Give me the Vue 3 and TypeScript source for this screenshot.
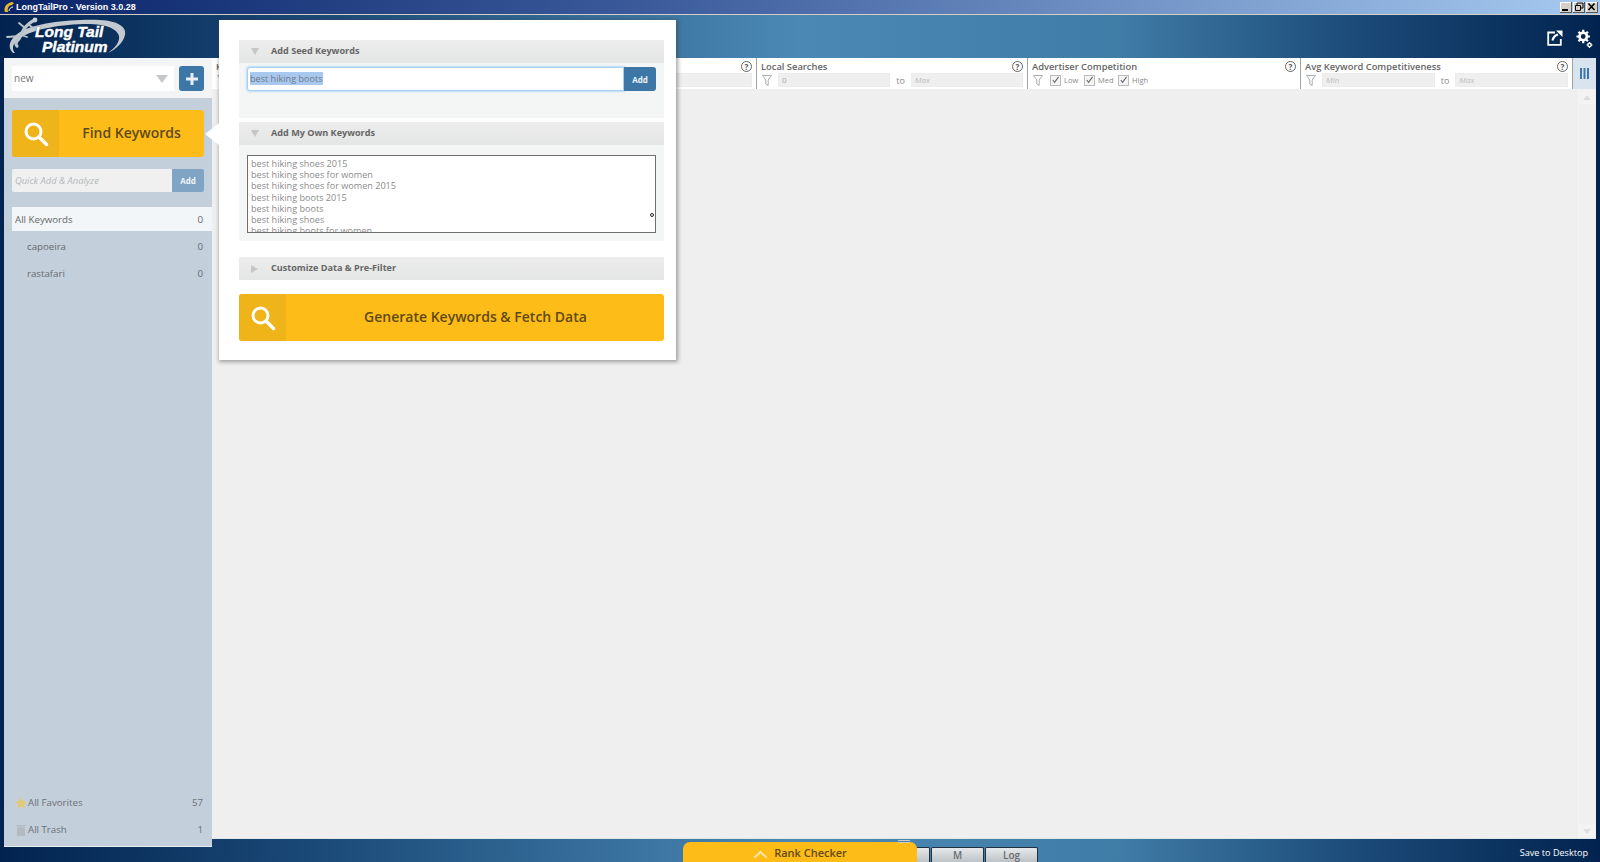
<script setup lang="ts">
type Filter = { title: string; kind: "range" | "checks"; from?: string };

const filters: Filter[] = [
  { title: "Keyword", kind: "range", from: "" },
  { title: "Local Searches", kind: "range", from: "0" },
  { title: "Advertiser Competition", kind: "checks" },
  { title: "Avg Keyword Competitiveness", kind: "range", from: "" }
];

const campaigns = [
  { name: "capoeira", count: 0 },
  { name: "rastafari", count: 0 }
];

const ownKeywords = [
  "best hiking shoes 2015",
  "best hiking shoes for women",
  "best hiking shoes for women 2015",
  "best hiking boots 2015",
  "best hiking boots",
  "best hiking shoes",
  "best hiking boots for women"
];

const levels = ["Low", "Med", "High"];
</script>

<template>
  <div class="app">
    <div class="titlebar">
      <svg class="title-icon" viewBox="0 0 12 12" width="12" height="12">
        <path d="M2 11 C0 6 4 2 9 1 L11 2 L9 4 C6 4 4 7 5 11 Z" fill="#e8b524" />
        <path d="M6 10 C6 8 8 6 10 6" stroke="#fff" fill="none" />
      </svg>
      <span class="title-text">LongTailPro - Version 3.0.28</span>
      <div class="win-buttons">
        <span class="win-btn"><svg viewBox="0 0 12 10" width="12" height="10"><rect x="2" y="7" width="6" height="2" fill="#000" /></svg></span>
        <span class="win-btn"><svg viewBox="0 0 12 10" width="12" height="10"><path d="M4 1h6v5H8M4 1v2M2.5 3.5h5v5h-5z" fill="none" stroke="#000" /></svg></span>
        <span class="win-btn"><svg viewBox="0 0 12 10" width="12" height="10"><path d="M2.5 1.5l6 6.5M8.5 1.5l-6 6.5" stroke="#000" stroke-width="1.6" /></svg></span>
      </div>
    </div>

    <header class="topbar">
      <div class="logo">
        <svg class="logo-art" viewBox="0 0 130 43" width="130" height="43">
          <path d="M13 38 C7 32 9 24 20 17 C36 8 70 4 100 5 C118 6 127 12 125 20 C123 28 116 34 108 38 C115 33 120 27 119 21 C117 13 104 9 88 9 C62 9 34 14 20 23 C13 28 11 33 15 38 Z" fill="#c2c9cf" />
          <path d="M35 5 C30 7 27 10 24 14 C21 19 21 22 18 25 C16 27 15 29 17 31" fill="none" stroke="#bcc4ca" stroke-width="3.2" stroke-linecap="round" />
          <path d="M28 9 L33 13 M25 13 L19 8 M21 20 L27 22 M20 21 L7 22 M17 26 L12 28" fill="none" stroke="#bcc4ca" stroke-width="1.8" stroke-linecap="round" />
          <circle cx="35" cy="5" r="2.4" fill="#c8ced3" />
        </svg>
        <div class="logo-words">
          <span class="logo-line">Long Tail</span>
          <span class="logo-line second">Platinum</span>
        </div>
      </div>
      <div class="top-actions">
        <svg class="share-icon" viewBox="0 0 16 16" width="16" height="16">
          <path d="M8 2.5H1.2v12.3h12.6V9" fill="none" stroke="#fff" stroke-width="1.8" />
          <path d="M5.5 10.5c.5-3 2.5-5 5.5-6" fill="none" stroke="#fff" stroke-width="2.2" />
          <path d="M9 0.5h6.5V7z" fill="#fff" />
        </svg>
        <svg class="gear-icon" viewBox="0 0 17 20" width="17" height="20">
          <circle cx="7.2" cy="7.5" r="3.7" fill="none" stroke="#fff" stroke-width="2.6" />
          <path d="M7.2 0.8v2.6M7.2 11.6v2.6M0.5 7.5h2.6M11.3 7.5h2.6M2.5 2.8l1.8 1.8M10.1 10.4l1.8 1.8M2.5 12.2l1.8-1.8M10.1 4.6l1.8-1.8" stroke="#fff" stroke-width="2.2" />
          <circle cx="13.5" cy="16" r="1.7" fill="none" stroke="#fff" stroke-width="1.5" />
          <path d="M13.5 13v1M13.5 18v1M10.5 16h1M15.5 16h1" stroke="#fff" stroke-width="1.1" />
        </svg>
      </div>
    </header>

    <div class="workspace">
      <aside class="sidebar">
        <div class="side-top">
          <div class="project-select">
            <span>new</span>
            <i class="select-caret"></i>
          </div>
          <button class="plus-btn">
            <svg viewBox="0 0 14 14" width="14" height="14"><path d="M7 1v12M1 7h12" stroke="#e8eef3" stroke-width="3" /></svg>
          </button>
        </div>

        <div class="side-body">
          <button class="find-btn">
            <span class="find-icon">
              <svg viewBox="0 0 26 26" width="26" height="26">
                <circle cx="10.5" cy="10.5" r="7.5" fill="none" stroke="#fff" stroke-width="3" />
                <path d="M16 16l7.5 7.5" stroke="#fff" stroke-width="3.4" stroke-linecap="round" />
              </svg>
            </span>
            <span class="find-label">Find Keywords</span>
          </button>

          <div class="quick-add">
            <span class="quick-input">Quick Add &amp; Analyze</span>
            <span class="quick-btn">Add</span>
          </div>

          <div class="kw-row all"><span>All Keywords</span><span>0</span></div>
          <div v-for="c in campaigns" :key="c.name" class="kw-row child">
            <span>{{ c.name }}</span><span>{{ c.count }}</span>
          </div>

          <div class="side-foot">
            <div class="foot-row">
              <svg viewBox="0 0 12 12" width="12" height="12"><path d="M6 0.3l1.8 3.7 4 .6-2.9 2.8.7 4L6 9.5l-3.6 1.9.7-4L.2 4.6l4-.6z" fill="#e3c875" /></svg>
              <span class="foot-name">All Favorites</span><span>57</span>
            </div>
            <div class="foot-row">
              <svg viewBox="0 0 12 12" width="12" height="12"><path d="M1.5 1h9v1.5h-9zM2 3.2h8V12H2z" fill="#b3bbc2" /></svg>
              <span class="foot-name">All Trash</span><span>1</span>
            </div>
          </div>
        </div>
      </aside>

      <div class="right">
        <section class="filters">
          <div v-for="f in filters" :key="f.title" class="filter">
            <div class="filter-head">
              <span class="filter-title">{{ f.title }}</span>
              <span class="help">?</span>
            </div>
            <div class="filter-line">
              <svg class="funnel" viewBox="0 0 10 11" width="10" height="11">
                <path d="M0.5 0.5h9L6.2 5v5.5L3.8 9V5z" fill="none" stroke="#a9aeb2" />
              </svg>
              <template v-if="f.kind === 'range'">
                <span class="range-input" :class="{ muted: !f.from }">{{ f.from || "Min" }}</span>
                <span class="to">to</span>
                <span class="range-input muted">Max</span>
              </template>
              <template v-else>
                <label v-for="l in levels" :key="l" class="level">
                  <span class="check">
                    <svg viewBox="0 0 10 10" width="10" height="10"><path d="M2 5l2 2.6L8.4 1.6" fill="none" stroke="#666" stroke-width="1.2" /></svg>
                  </span>{{ l }}
                </label>
              </template>
            </div>
          </div>
          <div class="columns-toggle">
            <svg viewBox="0 0 9 11" width="9" height="11"><path d="M0 0h2v11H0zM3.5 0h2v11h-2zM7 0h2v11H7z" fill="#3a78ad" /></svg>
          </div>
        </section>

        <main class="content">
          <div class="scrollbar">
            <span class="scroll-btn"><i class="up"></i></span>
            <span class="scroll-btn"><i class="down"></i></span>
          </div>
        </main>

        <footer class="footer">
          <div class="rank-tab">
            <svg viewBox="0 0 16 9" width="15" height="9"><path d="M1.5 8L8 1.8 14.5 8" fill="none" stroke="#fbe3a4" stroke-width="2.2" /></svg>
            <span>Rank Checker</span>
            <i class="rank-handle"></i>
          </div>
          <span class="log-tab stub"></span>
          <span class="log-tab">M</span>
          <span class="log-tab">Log</span>
          <span class="save">Save to Desktop</span>
        </footer>
      </div>
    </div>

    <!-- popup lies over the sidebar edge and filter bar -->
    <div class="popup">
      <i class="popup-arrow"></i>
      <div class="panel">
        <div class="panel-head"><i class="tri"></i>Add Seed Keywords</div>
        <div class="panel-body seed">
          <div class="seed-row">
            <div class="seed-input"><span class="selected">best hiking boots</span></div>
            <button class="seed-add">Add</button>
          </div>
        </div>
      </div>
      <div class="panel">
        <div class="panel-head"><i class="tri"></i>Add My Own Keywords</div>
        <div class="panel-body own">
          <div class="own-box">
            <div v-for="k in ownKeywords" :key="k">{{ k }}</div>
            <i class="grip"></i>
          </div>
        </div>
      </div>
      <div class="panel closed">
        <div class="panel-head"><i class="tri side"></i>Customize Data &amp; Pre-Filter</div>
      </div>
      <button class="generate">
        <span class="find-icon">
          <svg viewBox="0 0 26 26" width="26" height="26">
            <circle cx="10.5" cy="10.5" r="7.5" fill="none" stroke="#fff" stroke-width="3" />
            <path d="M16 16l7.5 7.5" stroke="#fff" stroke-width="3.4" stroke-linecap="round" />
          </svg>
        </span>
        <span class="generate-label">Generate Keywords &amp; Fetch Data</span>
      </button>
    </div>
  </div>
</template>

<style>
html,
body {
  margin: 0;
  overflow: hidden;
}
</style>

<style scoped>
.app {
  position: relative;
  width: 1600px;
  height: 862px;
  overflow: hidden;
  display: flex;
  flex-direction: column;
  font-family: "Open Sans", sans-serif;
  color: #666;
  background: linear-gradient(90deg, #02234f 0%, #1b4a78 20%, #4b89b4 50%, #3f7ca6 70%, #1b4a78 85%, #02234f 100%);
}

button {
  border: 0;
  padding: 0;
  font-family: inherit;
  cursor: pointer;
}

/* window chrome */
.titlebar {
  height: 14px;
  flex: none;
  display: flex;
  align-items: center;
  padding: 0 2px 0 3px;
  background: linear-gradient(90deg, #0a246a 0%, #3a5a9a 40%, #a6caf0 100%);
  border-bottom: 1px solid #d4d0c8;
}

.title-icon {
  margin-right: 1px;
}

.title-text {
  color: #fff;
  font: bold 9px "Liberation Sans", sans-serif;
}

.win-buttons {
  margin-left: auto;
  display: flex;
  gap: 1px;
}

.win-btn {
  width: 12px;
  height: 11px;
  background: #d4d0c8;
  box-shadow: inset -1px -1px #555, inset 1px 1px #fff;
  display: flex;
  align-items: center;
  justify-content: center;
}

.topbar {
  height: 43px;
  flex: none;
  display: flex;
  align-items: flex-start;
  justify-content: space-between;
}

.logo {
  position: relative;
  width: 130px;
  height: 43px;
}

.logo-art {
  position: absolute;
  left: 0;
  top: 0;
}

.logo-words {
  position: absolute;
  left: 35px;
  top: 10px;
  color: #fff;
  font: italic bold 15.5px/14.5px "Liberation Sans", sans-serif;
  -webkit-text-stroke: 0.4px #fff;
  text-shadow: 0 0 2px #0b2c57;
  white-space: nowrap;
}

.logo-line {
  display: block;
}

.logo-line.second {
  margin-left: 7px;
}

.top-actions {
  display: flex;
  gap: 13px;
  padding: 14px 7px 0 0;
}

.share-icon {
  margin-top: 1px;
}

.workspace {
  flex: 1;
  display: flex;
  padding: 0 4px 0 4px;
  min-height: 0;
}

/* sidebar */
.sidebar {
  width: 208px;
  height: 788px;
  flex: none;
  display: flex;
  flex-direction: column;
}

.side-top {
  height: 40px;
  flex: none;
  display: flex;
  gap: 5px;
  padding: 8px 8px 0;
  box-sizing: border-box;
  background: #f2f4f6;
}

.project-select {
  width: 162px;
  height: 25px;
  padding: 0 6px 2px 2px;
  box-sizing: border-box;
  background: #fff;
  display: flex;
  align-items: center;
  justify-content: space-between;
  font-size: 10px;
  color: #777;
}

.select-caret {
  margin-top: 2px;
  border-left: 6px solid transparent;
  border-right: 6px solid transparent;
  border-top: 8px solid #c4c8cb;
}

.plus-btn {
  width: 25px;
  height: 25px;
  border-radius: 3px;
  background: #3d77a8;
  display: flex;
  align-items: center;
  justify-content: center;
}

.side-body {
  flex: 1;
  display: flex;
  flex-direction: column;
  padding-top: 12px;
  background: #c3cfdb;
  box-shadow: 0 1px 0 #e9eef2;
}

.find-btn {
  width: 192px;
  height: 47px;
  margin-left: 8px;
  flex: none;
  border-radius: 3px;
  background: #febc18;
  display: flex;
  align-items: center;
  color: #5e4a16;
}

.find-icon {
  width: 47px;
  height: 47px;
  flex: none;
  border-radius: 3px 0 0 3px;
  background: #efb41a;
  display: flex;
  align-items: center;
  justify-content: center;
}

.find-label {
  flex: 1;
  text-align: center;
  padding-bottom: 2px;
  font-size: 14px;
  font-weight: 600;
}

.quick-add {
  margin: 12px 8px 0;
  height: 23px;
  flex: none;
  display: flex;
  border-radius: 2px;
  overflow: hidden;
}

.quick-input {
  flex: 1;
  padding-left: 3px;
  background: #f0f0f0;
  color: #b4b8bb;
  font-size: 9.3px;
  font-style: italic;
  line-height: 23px;
}

.quick-btn {
  width: 32px;
  background: #7fa4c4;
  color: #f0f4f7;
  text-align: center;
  font-size: 8px;
  font-weight: 700;
  line-height: 23px;
}

.kw-row {
  height: 24px;
  flex: none;
  margin-left: 8px;
  padding: 0 9px 0 3px;
  margin-top: 3px;
  display: flex;
  align-items: center;
  justify-content: space-between;
  font-size: 9.7px;
  color: #666;
}

.kw-row.all {
  margin-top: 15px;
  background: #f3f6f8;
}

.kw-row.child {
  padding-left: 15px;
  color: #666b72;
}

.side-foot {
  margin-top: auto;
  padding-bottom: 3px;
}

.foot-row {
  height: 27px;
  margin-left: 11px;
  padding-right: 9px;
  display: flex;
  align-items: center;
  font-size: 9.7px;
  color: #6d7175;
}

.foot-name {
  flex: 1;
  margin-left: 1px;
}

/* filter strip */
.right {
  flex: 1;
  min-width: 0;
  display: flex;
  flex-direction: column;
}

.filters {
  height: 31px;
  flex: none;
  display: grid;
  grid-template-columns: 545px 271px 273px 272px 23px;
  background: #fff;
}

.filter {
  padding: 2px 4px 0 4px;
  box-sizing: border-box;
  border-right: 1px solid #9da3a8;
  display: flex;
  flex-direction: column;
}

.filter-head {
  height: 13px;
  display: flex;
  align-items: center;
  justify-content: space-between;
}

.filter-title {
  font-size: 9.35px;
  font-weight: 600;
  color: #666;
}

.help {
  width: 9px;
  height: 9px;
  border: 1px solid #666;
  border-radius: 50%;
  font-size: 8px;
  line-height: 9px;
  font-weight: 700;
  text-align: center;
  color: #555;
}

.filter-line {
  display: flex;
  align-items: center;
  gap: 6px;
  height: 14px;
}

.funnel {
  flex: none;
  margin-left: 1px;
}

.range-input {
  flex: 1;
  height: 14px;
  padding-left: 3px;
  box-sizing: border-box;
  background: #efefef;
  border: 1px solid #ececec;
  font-size: 8px;
  line-height: 12px;
  color: #a8a8a8;
}

.range-input.muted {
  font-style: italic;
  color: #bdbdbd;
}

.to {
  font-size: 9px;
  color: #888;
}

.level {
  display: flex;
  align-items: center;
  gap: 3px;
  width: 28px;
  font-size: 7.5px;
  color: #888;
}

.level:first-of-type {
  margin-left: 1px;
}

.check {
  width: 9px;
  height: 9px;
  flex: none;
  border: 1px solid #bbb;
  display: flex;
  align-items: center;
  justify-content: center;
  background: #f4f4f4;
}

.columns-toggle {
  background: #d9e4ef;
  display: flex;
  align-items: center;
  justify-content: center;
}

.content {
  flex: 1;
  min-height: 0;
  display: flex;
  justify-content: flex-end;
  background: #efefef;
  box-shadow: 0 1px 0 #dfe6ea;
}

.scrollbar {
  width: 16px;
  margin-right: 1px;
  padding-top: 1px;
  display: flex;
  flex-direction: column;
  justify-content: space-between;
  background: #f0f0f0;
  border-left: 1px solid #f5f5f5;
}

.scroll-btn {
  height: 14px;
  background: #f3f3f3;
  display: flex;
  align-items: center;
  justify-content: center;
}

.scroll-btn .up {
  border-left: 4px solid transparent;
  border-right: 4px solid transparent;
  border-bottom: 5px solid #dddddd;
}

.scroll-btn .down {
  border-left: 4px solid transparent;
  border-right: 4px solid transparent;
  border-top: 5px solid #dddddd;
}

/* footer */
.footer {
  height: 24px;
  flex: none;
  display: flex;
  align-items: flex-end;
  padding-left: 471px;
}

.rank-tab {
  position: relative;
  width: 234px;
  height: 20px;
  flex: none;
  border-radius: 7px 7px 0 0;
  background: #febc18;
  display: flex;
  align-items: flex-start;
  justify-content: center;
  gap: 6px;
  padding-top: 4px;
  box-sizing: border-box;
  font-size: 11px;
  font-weight: 600;
  color: #5e4a16;
  line-height: 14px;
}

.rank-tab svg {
  margin-top: 4px;
}

.rank-handle {
  position: absolute;
  right: 7px;
  top: -2px;
  width: 12px;
  height: 1px;
  border-top: 1px solid #c9cdd0;
  border-bottom: 1px solid #d8cfa8;
}

.log-tab {
  width: 53px;
  height: 15px;
  flex: none;
  margin-right: 1px;
  box-sizing: border-box;
  border: 1px solid #1f3040;
  border-bottom: 0;
  border-radius: 2px 2px 0 0;
  background: linear-gradient(#e6e9eb, #bcc3c8);
  text-align: center;
  font-size: 10px;
  font-weight: 600;
  line-height: 15px;
  color: #6a6d70;
}

.log-tab.stub {
  width: 13px;
  border-left: 0;
  border-radius: 0 2px 0 0;
}

.save {
  margin-left: auto;
  padding: 0 8px 3px 0;
  font-size: 9.1px;
  color: #fff;
}

/* popup */
.popup {
  position: absolute;
  left: 219px;
  top: 20px;
  width: 457px;
  height: 340px;
  padding: 20px 12px 0 20px;
  box-sizing: border-box;
  background: #fff;
  box-shadow: 1px 1px 4px 1px rgba(60, 60, 60, 0.45);
}

.popup-arrow {
  position: absolute;
  left: -14px;
  top: 103px;
  border-top: 11px solid transparent;
  border-bottom: 11px solid transparent;
  border-right: 14px solid #fff;
}

.panel {
  margin-bottom: 4px;
}

.panel.closed {
  margin: 16px 0 14px;
}

.panel-head {
  height: 23px;
  padding: 0 0 2px 12px;
  box-sizing: border-box;
  display: flex;
  align-items: center;
  background: linear-gradient(#ededed, #e4e5e5);
  font-size: 9.1px;
  font-weight: 700;
  color: #666;
}

.tri {
  width: 0;
  height: 0;
  margin: 2px 12px 0 0;
  border-left: 4px solid transparent;
  border-right: 4px solid transparent;
  border-top: 7px solid #c6c6c6;
}

.tri.side {
  border-top: 4px solid transparent;
  border-bottom: 4px solid transparent;
  border-left: 7px solid #c6c6c6;
  border-right: 0;
  margin-right: 13px;
}

.panel-body {
  background: #f4f6f6;
  box-sizing: border-box;
}

.panel-body.seed {
  height: 55px;
  padding: 4px 8px 0;
}

.seed-row {
  display: flex;
  height: 24px;
}

.seed-input {
  flex: 1;
  padding-left: 2px;
  box-sizing: border-box;
  border: 1px solid #a9cff0;
  border-radius: 3px 0 0 3px;
  background: #fff;
  box-shadow: 0 0 2px 1px #bcdcf5;
  font-size: 9.1px;
  line-height: 21px;
  color: #6f7a85;
}

.selected {
  background: #a8c8f0;
}

.seed-add {
  position: relative;
  width: 32px;
  height: 24px;
  border-radius: 0 3px 3px 0;
  background: #3d77a8;
  color: #eef3f7;
  font-size: 8px;
  font-weight: 700;
}

.panel-body.own {
  height: 96px;
  padding: 10px 8px 0;
}

.own-box {
  position: relative;
  height: 78px;
  padding: 2px 3px;
  box-sizing: border-box;
  overflow: hidden;
  border: 1px solid #6e6e6e;
  background: #fff;
  font-size: 9.1px;
  line-height: 11.2px;
  color: #8c8c8c;
}

.grip {
  position: absolute;
  right: 1px;
  top: 57px;
  width: 2px;
  height: 2px;
  border: 1px solid #222;
  border-radius: 50%;
}

.generate {
  width: 425px;
  height: 47px;
  border-radius: 3px;
  background: #febc18;
  display: flex;
  align-items: center;
  color: #5e4a16;
}

.generate-label {
  flex: 1;
  text-align: center;
  padding: 0 0 2px 1px;
  font-size: 14px;
  font-weight: 600;
}
</style>
